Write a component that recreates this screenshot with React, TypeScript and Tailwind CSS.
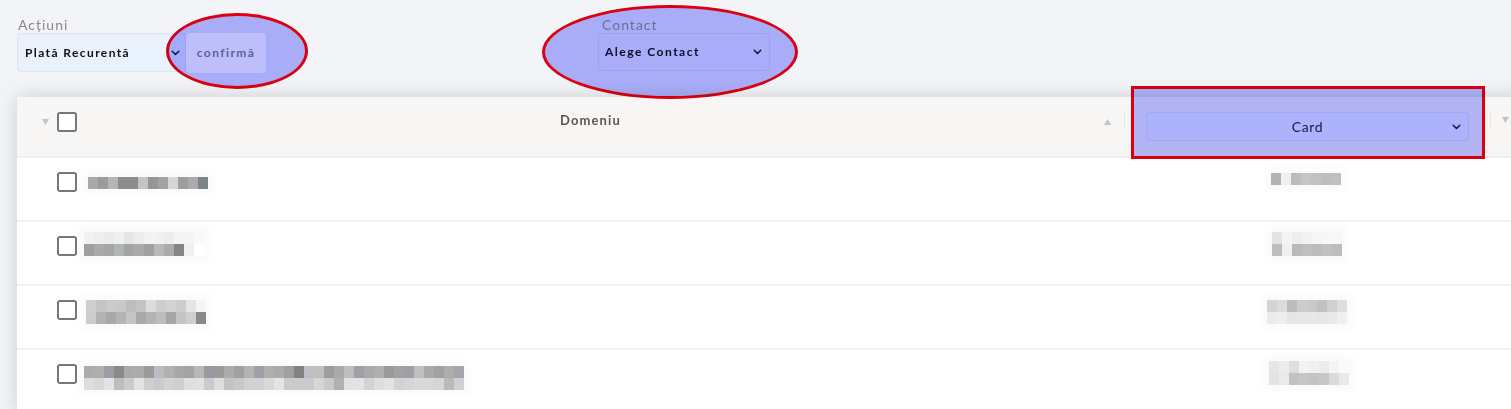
import React from "react";

type Grid = string[][];

function Blur({ grid, cw = 10, ch = 12, className = "" }: { grid: Grid; cw?: number; ch?: number; className?: string }) {
  return (
    <div className={"flex flex-col shrink-0 shadow-[0_0_8px_6px_rgba(0,0,0,0.02)] " + className}>
      {grid.map((row, i) => (
        <div key={i} className="flex">
          {row.map((c, j) => (
            <div key={j} style={{ width: cw, height: ch, backgroundColor: c }} />
          ))}
        </div>
      ))}
    </div>
  );
}

function seeded(n: number, seed: number, base: number, spread: number, darkEvery: number): string[] {
  const out: string[] = [];
  let s = seed;
  for (let i = 0; i < n; i++) {
    s = (s * 9301 + 49297) % 233280;
    const r = s / 233280;
    let v = Math.round(base + (r - 0.5) * spread);
    if (darkEvery && i % darkEvery === 3) v -= 25;
    v = Math.max(0, Math.min(255, v));
    const h = v.toString(16).padStart(2, "0");
    const b = Math.min(255, v + (i % 5 === 2 ? 6 : 0)).toString(16).padStart(2, "0");
    out.push("#" + h + h + b);
  }
  return out;
}

const L1: Grid = [["#a9a9a9", "#9b9b9b", "#b5b5b5", "#8c8c8c", "#8c8c8c", "#c4c4c4", "#959595", "#a2a2a2", "#d6d6d6", "#9d9d9d", "#ababab", "#7d8488"]];
const L2: Grid = [
  ["#f2f2f2", "#eeeeee", "#ebebeb", "#f0f0f0", "#e6e6e6", "#ececec", "#f3f3f3", "#f1f1f1", "#eeeeee", "#f4f4f4", "#f5f5f5", "#fafafa"],
  ["#a0a0a0", "#aaaaaa", "#a6a6a6", "#b0b6b8", "#a4a4a4", "#aaaaaa", "#a0a0a0", "#b8b8b8", "#ababab", "#858585", "#eef0f3", "#ffffff"],
];
const L3: Grid = [
  ["#cfcfcf", "#c5c5c5", "#cbcbcb", "#c9c9c9", "#bdbdbd", "#c3c3c3", "#dcdcdc", "#cecece", "#d3d3d3", "#cdcdcd", "#e5e5e5", "#f5f5f5"],
  ["#cccccc", "#b2b2b2", "#a8a8a8", "#b4b4b4", "#c5c5c5", "#a9a9a9", "#b3b3b3", "#bdbdbd", "#a5a5a5", "#c4c4c4", "#cfcfcf", "#898989"],
];
const L4: Grid = [seeded(38, 7, 172, 40, 9), seeded(38, 13, 214, 30, 11)];

const R1: Grid = [["#b3b3b3", "#f0f0f0", "#bcbcbc", "#c6c6c6", "#c2c2c2", "#bdbdbd", "#c0c0c0"]];
const R2: Grid = [
  ["#e4e4e4", "#f4f4f4", "#eeeeee", "#f3f3f3", "#f6f6f6", "#f7f7f7", "#f8f8f8"],
  ["#bdbdbd", "#f0f0f0", "#bababa", "#bfbfbf", "#bcbcbc", "#c1c1c1", "#bdbdbd"],
];
const R3: Grid = [
  ["#d4d4d4", "#d8dde0", "#bcbcbc", "#cccccc", "#c9c9c9", "#c1c1c1", "#d0d0d0", "#dedede"],
  ["#ebebeb", "#eeeeee", "#e5e5e5", "#e7e7e7", "#e8e8e8", "#e6e6e6", "#e9e9e9", "#f0f0f0"],
];
const R4: Grid = [
  ["#e6e6e6", "#ececec", "#dedede", "#f2f2f2", "#f0f0f0", "#ececec", "#f4f4f4", "#fafafa"],
  ["#e3e3e3", "#eaeaea", "#c2c2c2", "#c6c6c6", "#c3c3c3", "#c8c8c8", "#dadada", "#e9e9e9"],
];

function Chevron({ className = "" }: { className?: string }) {
  return (
    <svg width="9" height="6" viewBox="0 0 9 6" className={className}>
      <polyline points="1.2,1.2 4.5,4.5 7.8,1.2" fill="none" stroke="currentColor" strokeWidth="1.5" strokeLinecap="round" strokeLinejoin="round" />
    </svg>
  );
}

function Tri({ up = false }: { up?: boolean }) {
  return (
    <svg width="7" height="6" viewBox="0 0 7 6" className="shrink-0">
      {up ? <polygon points="0,6 7,6 3.5,0" fill="#c4c4c4" /> : <polygon points="0,0 7,0 3.5,6" fill="#c4c4c4" />}
    </svg>
  );
}

function Box() {
  return <div className="w-[20px] h-[20px] shrink-0 rounded-[3px] border-2 border-[#77767e] bg-white" />;
}

function Row({ left, right, lc, rc }: { left: Grid; right: Grid; lc: string; rc: string }) {
  return (
    <div className="h-[64px] border-b-2 border-[#f1f1f2] flex">
      <div className="w-[1107px] flex items-start pl-[40px]">
        <div className="mt-[14px]">
          <Box />
        </div>
        <Blur grid={left} className={lc} />
      </div>
      <div className="w-[366px] flex justify-center items-start">
        <Blur grid={right} className={rc} />
      </div>
    </div>
  );
}

export default function App() {
  return (
    <div className="relative w-[1511px] h-[409px] overflow-hidden bg-[#f3f4f8] font-['Lato','Noto_Sans',sans-serif]">
      {/* top bar */}
      <div className="h-[97px] flex items-start pl-[17px] pt-[16px]">
        <div className="flex flex-col">
          <div className="text-[14px] leading-[17px] text-[#8d8987] tracking-[1px] pl-[1px]">Acțiuni</div>
          <div className="flex items-start">
            <div className="w-[169px] h-[39px] bg-[#e9f1fd] border border-[#dce5f3] rounded-l-[4px] flex items-center pl-[7px] pr-[5px] justify-between">
              <span className="text-[12px] font-bold text-[#111111] tracking-[1.4px]">Plată Recurentă</span>
              <Chevron className="text-[#1c1c3a]" />
            </div>
            <div className="relative z-10 w-[80px] h-[40px] bg-[#bebffa] rounded-[4px] flex items-center justify-center">
              <span className="text-[12px] font-bold text-[#5e5f9c] tracking-[1.4px]">confirmă</span>
            </div>
          </div>
        </div>
        <div className="flex flex-col ml-[332px]">
          <div className="text-[14px] leading-[17px] text-[#9a9896] tracking-[1px] pl-[4px]">Contact</div>
          <div className="w-[172px] h-[38px] bg-[#f1f3f9] border border-[#dfe2ec] rounded-[4px] flex items-center justify-between pl-[6px] pr-[7px]">
            <span className="text-[12px] font-bold text-[#111122] tracking-[1.5px]">Alege Contact</span>
            <Chevron className="text-[#1c1c3a]" />
          </div>
        </div>
      </div>

      {/* table card */}
      <div className="ml-[17px] w-[1510px] bg-white shadow-[0_0_18px_rgba(0,0,0,0.16)]">
        <div className="h-[61px] bg-[#f7f6f4] flex items-start border-b-2 border-[#f1f0ef]">
          <div className="w-[1107px] h-[20px] mt-[15px] flex items-center pl-[25px]">
            <Tri />
            <div className="ml-[8px]">
              <Box />
            </div>
            <div className="flex-1 text-center text-[13px] font-bold text-[#5b5650] tracking-[1.1px] -mt-[2px]">Domeniu</div>
            <Tri up />
            <div className="w-[13px]" />
          </div>
          <div className="w-px h-[18px] mt-[14px] bg-[#e6e5e3]" />
          <div className="w-[365px] px-[21px] pt-[15px]">
            <div className="h-[29px] bg-[#eef3fc] border border-[#dde5f1] rounded-[3px] flex items-center relative">
              <span className="flex-1 text-center text-[14px] text-[#1e1e44] tracking-[0.6px]">Card</span>
              <Chevron className="absolute right-[7px] text-[#1c1c3a]" />
            </div>
          </div>
          <div className="w-px h-[18px] mt-[14px] bg-[#e6e5e3]" />
          <div className="pl-[11px] pt-[20px]">
            <Tri />
          </div>
        </div>

        <Row left={L1} right={R1} lc="mt-[19px] ml-[11px]" rc="mt-[15px] -ml-[2px]" />
        <Row left={L2} right={R2} lc="mt-[10px] ml-[7px]" rc="mt-[10px]" />
        <Row left={L3} right={R3} lc="mt-[14px] ml-[9px]" rc="mt-[14px]" />
        <Row left={L4} right={R4} lc="mt-[16px] ml-[7px]" rc="mt-[11px] ml-[4px]" />
      </div>

      {/* annotation overlays */}
      <div className="pointer-events-none absolute left-[166px] top-[13px] w-[142px] h-[76px] rounded-[50%] border-[3px] border-[#e6000f] bg-[#b2b5ff] mix-blend-multiply" />
      <div className="pointer-events-none absolute left-[542px] top-[5px] w-[256px] h-[94px] rounded-[50%] border-[3px] border-[#e6000f] bg-[#b2b5ff] mix-blend-multiply" />
      <div className="pointer-events-none absolute left-[1131px] top-[86px] w-[354px] h-[73px] border-[3px] border-[#e6000f] bg-[#b8bbff] mix-blend-multiply" />
    </div>
  );
}
